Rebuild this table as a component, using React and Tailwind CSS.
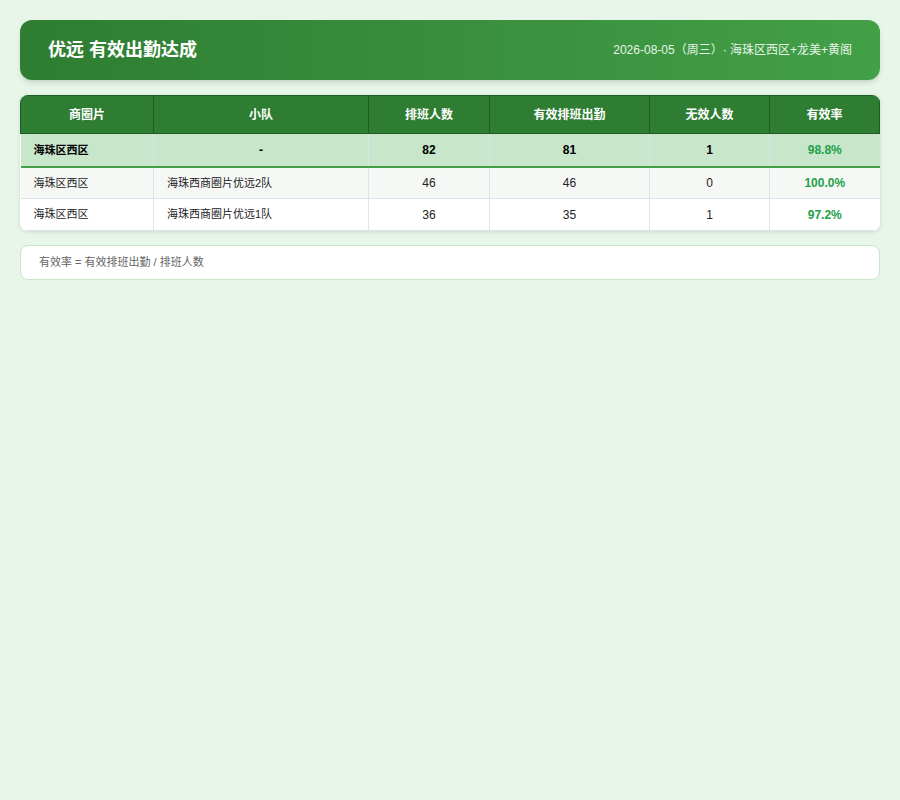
const rows = [
  { area: "海珠区西区", team: "海珠西商圈片优远2队", sched: 46, valid: 46, invalid: 0, rate: "100.0%" },
  { area: "海珠区西区", team: "海珠西商圈片优远1队", sched: 36, valid: 35, invalid: 1, rate: "97.2%" },
];

const font = { fontFamily: '"Liberation Sans", "Noto Sans CJK SC", sans-serif' };

export default function App() {
  return (
    <div className="min-h-[800px] bg-[#e8f5e9] p-5" style={font}>
      {/* Header */}
      <div className="flex h-[60px] items-center justify-between rounded-xl bg-gradient-to-r from-[#2e7d32] to-[#43a047] px-7 shadow-md">
        <h1 className="text-[18px] font-bold text-white">优远 有效出勤达成</h1>
        <div className="text-[12px] text-[#e8f5e9] [text-spacing-trim:space-all]">2026-08-05（周三）· 海珠区西区+龙美+黄阁</div>
      </div>

      {/* Table */}
      <div className="mt-[15px] overflow-hidden rounded-lg bg-white shadow-[0_1px_4px_rgba(0,0,0,0.12)]">
        <table className="w-full border-collapse text-[12px] text-[#222]">
          <colgroup>
            <col className="w-[133px]" />
            <col className="w-[215px]" />
            <col className="w-[121px]" />
            <col className="w-[160px]" />
            <col className="w-[120px]" />
            <col />
          </colgroup>
          <thead>
            <tr className="h-[38px] bg-[#2e7d32] text-white">
              {["商圈片", "小队", "排班人数", "有效排班出勤", "无效人数", "有效率"].map((h) => (
                <th key={h} className="border border-[#1b5e20] font-bold">{h}</th>
              ))}
            </tr>
          </thead>
          <tbody>
            <tr className="h-[33px] border-b-2 border-b-[#43a047] bg-[#c8e6c9] font-bold text-black">
              <td className="border-r border-[#dde3ea] pl-[13px] text-[11px]">海珠区西区</td>
              <td className="border-r border-[#dde3ea] text-center">-</td>
              <td className="border-r border-[#dde3ea] text-center">82</td>
              <td className="border-r border-[#dde3ea] text-center">81</td>
              <td className="border-r border-[#dde3ea] text-center">1</td>
              <td className="text-center text-[#22a049]">98.8%</td>
            </tr>
            {rows.map((r, i) => (
              <tr key={i} className={`h-[32px] border-b border-[#dde3ea] ${i === 0 ? "bg-[#f6f8f6]" : "bg-white"}`}>
                <td className="border-r border-[#dde3ea] pl-[13px] text-[11px]">{r.area}</td>
                <td className="border-r border-[#dde3ea] pl-[13px] text-[11px]">{r.team}</td>
                <td className="border-r border-[#dde3ea] text-center">{r.sched}</td>
                <td className="border-r border-[#dde3ea] text-center">{r.valid}</td>
                <td className="border-r border-[#dde3ea] text-center">{r.invalid}</td>
                <td className="text-center font-bold text-[#22a049]">{r.rate}</td>
              </tr>
            ))}
          </tbody>
        </table>
      </div>

      {/* Note */}
      <div className="mt-[14px] rounded-lg border border-[#c8e6c9] bg-white px-[18px] py-[9px] text-[11px] leading-[15px] text-[#666]">
        有效率 = 有效排班出勤 / 排班人数
      </div>
    </div>
  );
}
